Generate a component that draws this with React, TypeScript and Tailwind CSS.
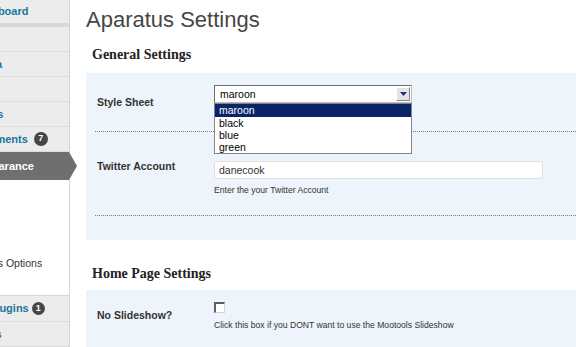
export default function App() {
  const sans = "font-['Liberation_Sans',Arial,sans-serif]";
  const serif = "font-['Liberation_Serif','Times_New_Roman',serif]";
  return (
    <div className={`flex w-[576px] h-[347px] overflow-hidden bg-white ${sans}`}>
      {/* Sidebar */}
      <aside className="relative w-[70px] shrink-0 flex flex-col bg-[#ececec] border-r border-[#d6d6d6] text-[11px] font-bold text-[#21759b]">
        <div className="h-[23px] flex items-center">
          <span className="ml-[-29px] whitespace-nowrap">Dashboard</span>
        </div>
        <div className="h-[4px] bg-[#d8d8d8]" />
        <div className="h-[25px] flex items-center border-b border-[#dddddd]">
          <span className="ml-[-36px] whitespace-nowrap">Posts</span>
        </div>
        <div className="h-[25px] flex items-center border-b border-[#dddddd]">
          <span className="ml-[-29px] whitespace-nowrap">Media</span>
        </div>
        <div className="h-[25px] flex items-center border-b border-[#dddddd]">
          <span className="ml-[-36px] whitespace-nowrap">Links</span>
        </div>
        <div className="h-[25px] flex items-center border-b border-[#dddddd]">
          <span className="ml-[-29px] whitespace-nowrap">Pages</span>
        </div>
        <div className="h-[25px] flex items-center border-b border-[#dddddd]">
          <span className="ml-[-29px] whitespace-nowrap">Comments</span>
          <span className="ml-[6px] w-[14px] h-[14px] rounded-full bg-[#464646] text-white text-[9px] flex items-center justify-center">7</span>
        </div>
        <div className="relative h-[28px] flex items-center bg-[#6f6f6f] text-white">
          <span className="ml-[-29px] whitespace-nowrap">Appearance</span>
          <span className="absolute left-full top-0 w-0 h-0 border-y-[14px] border-y-transparent border-l-[8px] border-l-[#6f6f6f]" />
        </div>
        <div className="h-[115px] flex flex-col bg-white font-normal text-[10.5px]">
          {["Themes", "Widgets", "Editor"].map((t) => (
            <div key={t} className="h-[24px] flex items-center">
              <span className="ml-[-39px] whitespace-nowrap">{t}</span>
            </div>
          ))}
          <div className="h-[24px] flex items-center text-[#333]">
            <span className="ml-[-39px] whitespace-nowrap">Aparatus Options</span>
          </div>
        </div>
        <div className="h-[27px] flex items-center border-t border-[#d6d6d6] border-b border-b-[#dddddd]">
          <span className="ml-[-11px] whitespace-nowrap">Plugins</span>
          <span className="ml-[3px] w-[13px] h-[13px] rounded-full bg-[#464646] text-white text-[9px] flex items-center justify-center">1</span>
        </div>
        <div className="h-[25px] flex items-center border-b border-[#dddddd]">
          <span className="ml-[-29px] whitespace-nowrap">Users</span>
        </div>
      </aside>

      {/* Main */}
      <main className="flex-1 flex flex-col pl-[16px] text-[#333]">
        <h1 className="pt-[7px] text-[22px] leading-[26px] font-normal text-[#464646]">Aparatus Settings</h1>
        <h2 className={`mt-[13px] ml-[6px] text-[14px] leading-[18px] font-bold text-[#222] ${serif}`}>General Settings</h2>

        <section className="mt-[9px] bg-[#eef4fb] pt-[12px] pb-[24px]">
          <div className="flex">
            <div className="w-[128px] pl-[11px] pt-[11px] text-[10.5px] leading-[12px] font-bold">Style Sheet</div>
            <div className="relative w-[198px] h-[18px] bg-white border border-t-[#6e6e6e] border-l-[#6e6e6e] border-b-[#bdbdbd] border-r-[#bdbdbd]">
              <div className="pl-[5px] text-[10.5px] leading-[16px] text-black">maroon</div>
              <div className="absolute top-[1px] right-[1px] w-[14px] h-[14px] bg-[#e4e4e4] border border-t-white border-l-white border-b-[#858585] border-r-[#858585] flex items-center justify-center">
                <svg width="7" height="4" viewBox="0 0 7 4">
                  <path d="M0 0 H7 L3.5 4 Z" fill="#1f2c8c" />
                </svg>
              </div>
              <div className="absolute left-[-1px] top-[17px] z-10 w-[198px] bg-white border border-[#858585] text-[10.5px] text-black">
                <div className="h-[13px] leading-[13px] pl-[4px] bg-[#0a246a] text-white">maroon</div>
                <div className="h-[12px] leading-[12px] pl-[4px]">black</div>
                <div className="h-[12px] leading-[12px] pl-[4px]">blue</div>
                <div className="h-[12px] leading-[12px] pl-[4px]">green</div>
              </div>
            </div>
          </div>
          <div className="mt-[23px] ml-[9px] border-t border-dotted border-[#7a7a7a]" />

          <div className="mt-[28px] flex">
            <div className="w-[128px] pl-[11px] text-[10.5px] leading-[12px] font-bold">Twitter Account</div>
            <div className="flex flex-col">
              <div className="mt-[1px] w-[329px] h-[18px] bg-white border border-[#dfdfdf] rounded-[3px] pl-[4px] text-[10.5px] leading-[16px] text-[#333]">danecook</div>
              <div className="mt-[6px] text-[8.6px] leading-[10px] text-[#333]">Enter the your Twitter Account</div>
            </div>
          </div>
          <div className="mt-[20px] ml-[9px] border-t border-dotted border-[#7a7a7a]" />
        </section>

        <h2 className={`mt-[25px] ml-[6px] text-[14px] leading-[18px] font-bold text-[#222] ${serif}`}>Home Page Settings</h2>

        <section className="mt-[7px] flex-1 bg-[#eef4fb] pt-[12px]">
          <div className="flex">
            <div className="w-[128px] pl-[11px] pt-[7px] text-[10.5px] leading-[12px] font-bold">No Slideshow?</div>
            <div className="flex flex-col">
              <div className="w-[11px] h-[11px] bg-white border border-t-2 border-l-2 border-t-[#5f5f5f] border-l-[#5f5f5f] border-b-[#d4d4d4] border-r-[#d4d4d4]" />
              <div className="mt-[7px] text-[8.6px] leading-[10px] text-[#333]">Click this box if you DONT want to use the Mootools Slideshow</div>
            </div>
          </div>
        </section>
      </main>
    </div>
  );
}
